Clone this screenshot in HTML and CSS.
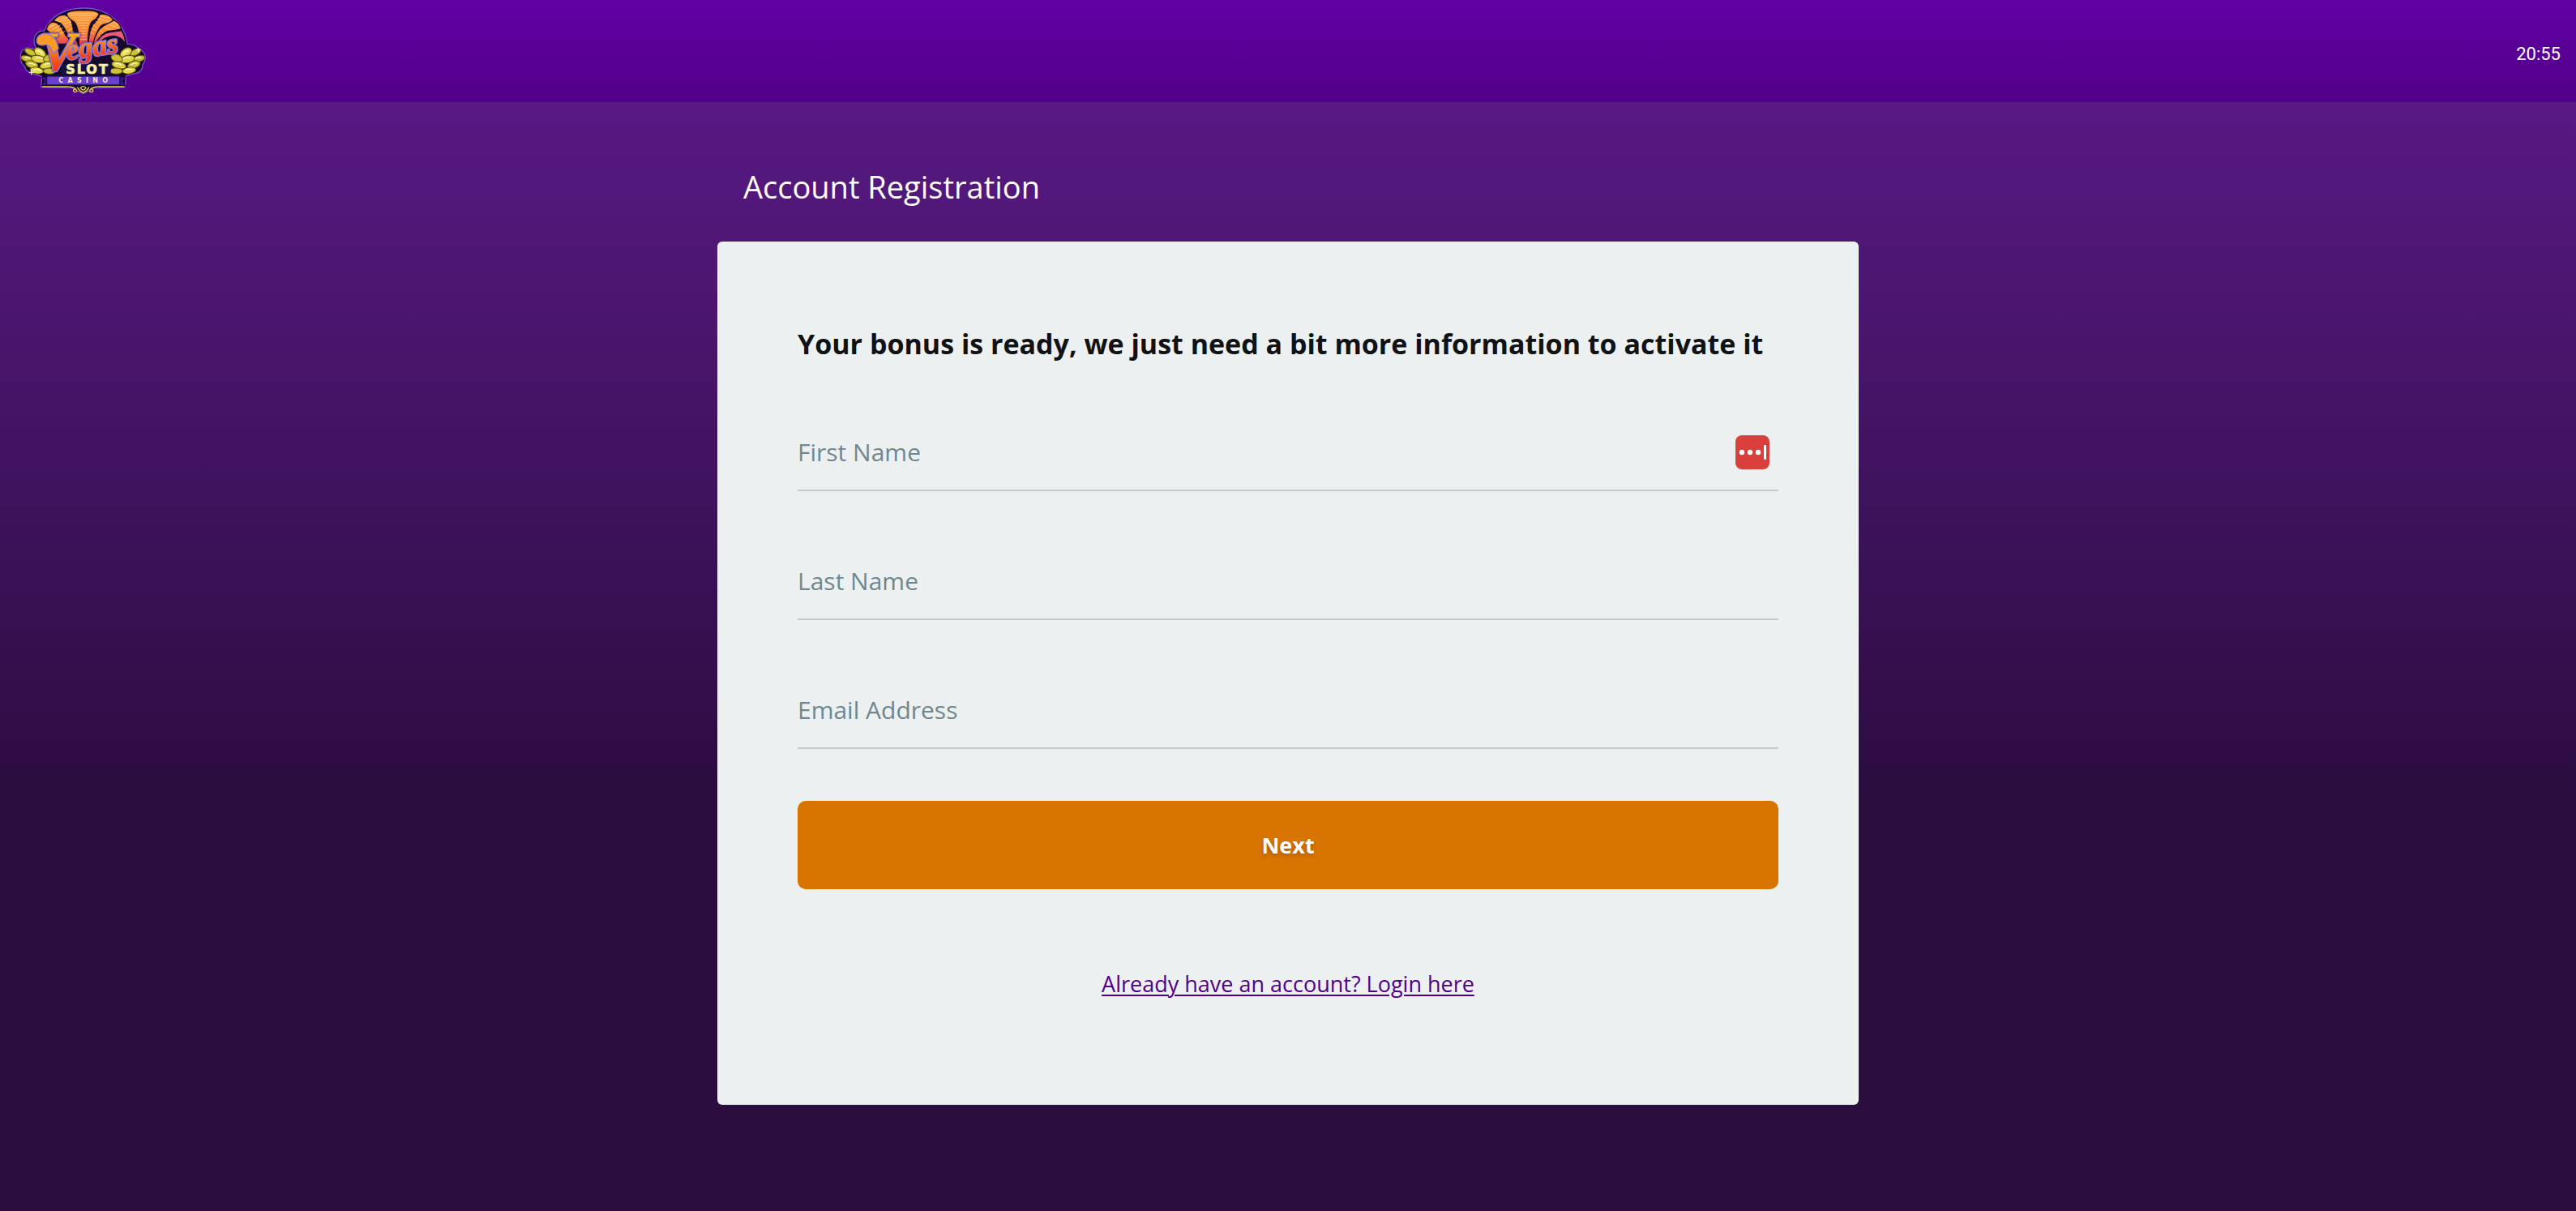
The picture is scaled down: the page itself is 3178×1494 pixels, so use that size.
FILE: index.html
```html
<!DOCTYPE html>
<html lang="en">
<head>
<meta charset="utf-8">
<meta name="viewport" content="width=device-width, initial-scale=1">
<title>Account Registration</title>
<link rel="stylesheet" href="styles.css">
</head>
<body>
<header class="topbar">
  <a class="brand" href="#" aria-label="Vegas Slot Casino">
    <svg class="logo" viewBox="39 18 480 336" aria-hidden="true">
      <defs>
        <linearGradient id="flame" x1="0" y1="0" x2="0" y2="1">
          <stop offset="0.2" stop-color="#ffb21a"/>
          <stop offset="0.8" stop-color="#f0381c"/>
        </linearGradient>
        <linearGradient id="fan" x1="0" y1="0" x2="0" y2="1">
          <stop offset="0" stop-color="#ffa040"/>
          <stop offset="0.5" stop-color="#f98a2e"/>
          <stop offset="1" stop-color="#e8405c"/>
        </linearGradient>
        <g id="coins" stroke="#5d5608" stroke-width="3" fill="#cdc236">
          <ellipse cx="82" cy="190" rx="22" ry="11" transform="rotate(28 82 190)"/>
          <ellipse cx="70" cy="214" rx="23" ry="11" transform="rotate(14 70 214)"/>
          <ellipse cx="118" cy="192" rx="24" ry="15" transform="rotate(35 118 192)" fill="#e4d94c"/>
          <ellipse cx="88" cy="236" rx="24" ry="13" transform="rotate(18 88 236)"/>
          <ellipse cx="112" cy="216" rx="27" ry="14" transform="rotate(10 112 216)" fill="#ddd144"/>
          <ellipse cx="152" cy="212" rx="22" ry="14" transform="rotate(-20 152 212)"/>
          <ellipse cx="106" cy="258" rx="25" ry="12" transform="rotate(8 106 258)" fill="#e4d94c"/>
          <ellipse cx="144" cy="238" rx="27" ry="13" transform="rotate(-14 144 238)" fill="#ddd144"/>
          <ellipse cx="154" cy="260" rx="24" ry="11"/>
          <path d="M62 212q10-7 22 2M102 213q14-8 26 2M76 234q10-7 24 4M134 238q10-9 24-4M96 257q12-8 24 1M107 186q14-4 20 12" fill="none" stroke="#fffbc0" stroke-width="4"/>
        </g>
      </defs>
      <!-- dark silhouette with the violet rim -->
      <path d="M133 112C158 52 215 26 284 27C362 28 430 75 442 160Q470 160 484 178Q510 190 508 212Q506 228 498 236Q498 262 474 268L436 278L433 320L318 322L278 344L236 322L122 320L125 280L92 270Q64 262 62 244Q44 230 46 205Q44 184 68 174L106 180Q84 140 110 118Q120 110 133 112Z" fill="#160a2c" stroke="#7651cb" stroke-width="4" stroke-linejoin="round"/>
      <use href="#coins"/>
      <use href="#coins" transform="matrix(-1 0 0 1 554 0)"/>
      <!-- feathered fan -->
      <g fill="url(#fan)" stroke="#160a2c" stroke-width="4" stroke-linejoin="round">
        <path d="M142 108Q145 82 166 78Q190 78 212 126L244 160H180Q150 110 142 108Z"/>
        <path d="M168 74Q184 50 210 52Q236 60 238 92Q242 128 262 166H230Q222 112 195 84Z"/>
        <path d="M216 48Q224 34 280 36Q328 34 337 48Q332 66 312 76Q296 88 296 166H262Q262 96 244 78Q220 66 216 48Z"/>
        <path d="M342 48Q374 48 388 68Q390 82 352 88Q330 98 318 160H296Q302 90 326 76Z"/>
        <path d="M392 72Q416 84 418 104Q400 110 370 112Q338 124 326 160H314Q326 108 354 92Z"/>
        <path d="M420 110Q434 132 434 160Q420 132 390 130Q354 132 336 160H324Q342 122 376 116Z" fill="#ec5a78"/>
      </g>
      <g fill="none" stroke="#ffd9a8" stroke-width="2">
        <path d="M226 48H326M230 55H322M240 63H314M250 72H302M256 82H298M262 92H294M264 102H292M266 112H290M266 122H290M267 132H290M268 142H290"/>
        <path d="M176 72L224 60M188 77L230 70M204 86L234 78M214 98L236 88M222 112L240 100M226 124L244 114M152 98L182 84M160 108L194 90M170 116L204 100M180 128L212 112"/>
        <path d="M338 56L376 64M330 66L374 78M324 76L346 84M314 88L330 100M308 102L324 110M304 116L318 124M386 78L408 90M372 88L410 100M356 98L380 108M342 110L352 120M332 124L342 132"/>
      </g>
      <g class="logo-script">
        <text x="118" y="256" font-size="200">V</text>
        <text x="218" y="218" font-size="106" transform="rotate(-8 218 218)">egas</text>
        <path d="M108 152Q108 122 142 124Q176 130 184 176L168 192Q154 152 130 162Q114 164 108 152Z" fill="#ff9a22"/>
      </g>
      <path d="M198 235H384L378 272H198Z" fill="#171044"/>
      <text class="logo-slot" x="294" y="270" text-anchor="middle" font-size="48">SLOT</text>
      <!-- ribbon and scrollwork -->
      <path d="M124 282H146V314H124L134 298ZM434 282H410V314H434L424 298Z" fill="#3c1797" stroke="#120a30" stroke-width="3"/>
      <path d="M142 278H414V312H142Z" fill="#6b3fd0" stroke="#171044" stroke-width="5"/>
      <text class="logo-casino" x="286" y="304" text-anchor="middle" font-size="24">CASINO</text>
      <path d="M126 318H214Q240 316 250 326Q260 338 246 338Q236 332 248 326M430 318H344Q316 316 306 326Q296 338 310 338Q320 332 308 326M256 320Q264 334 278 340Q292 334 300 320M268 322Q278 312 288 322Q278 338 268 322Z" fill="none" stroke="#e8da31" stroke-width="4"/>
      <path d="M86 256v18M77 265h18M482 174v16M474 182h16" stroke="#fff" stroke-width="3"/>
    </svg>
  </a>
  <time class="clock" datetime="20:55">20:55</time>
</header>
<main class="page">
  <h1 class="page-title">Account Registration</h1>
  <section class="card">
    <h2 class="card-title">Your bonus is ready, we just need a bit more information to activate it</h2>
    <form class="form">
      <div class="field">
        <label class="field-label" for="first-name">First Name</label>
        <input class="field-input" id="first-name" type="text">
        <button class="autofill" type="button" aria-label="Fill from password manager">
          <svg class="autofill-icon" viewBox="0 0 42 42" aria-hidden="true">
            <rect width="42" height="42" rx="8" fill="#d93f3b"/>
            <circle cx="8" cy="21" r="3.2" fill="#fff"/>
            <circle cx="18" cy="21" r="3.2" fill="#fff"/>
            <circle cx="28" cy="21" r="3.2" fill="#fff"/>
            <rect x="35" y="12" width="3" height="18" rx="1" fill="#fff"/>
          </svg>
        </button>
      </div>
      <div class="field">
        <label class="field-label" for="last-name">Last Name</label>
        <input class="field-input" id="last-name" type="text">
      </div>
      <div class="field">
        <label class="field-label" for="email">Email Address</label>
        <input class="field-input" id="email" type="email">
      </div>
      <button class="next" type="submit">Next</button>
    </form>
    <p class="login"><a class="login-link" href="#">Already have an account? Login here</a></p>
  </section>
</main>
</body>
</html>
```
FILE: styles.css
```css
* {
  box-sizing: border-box;
}

body {
  margin: 0;
  min-height: 100vh;
  background: #2b0d40 linear-gradient(#5f1b8d, #2b0d40 980px) no-repeat;
  font-family: "Segoe UI", "Open Sans", "Noto Sans", sans-serif;
}

.topbar {
  display: flex;
  align-items: center;
  justify-content: space-between;
  height: 126px;
  padding: 0 19px 0 23px;
  background: linear-gradient(#6100a4, #520089);
}

.brand,
.logo {
  display: block;
}

.logo {
  width: 160px;
  height: 112px;
}

.logo-script {
  fill: url(#flame);
  stroke: #8d77df;
  stroke-width: 9px;
  stroke-linejoin: round;
  paint-order: stroke;
  filter: drop-shadow(0 0 3px #160a2c);
  font-family: "Liberation Serif", serif;
  font-style: italic;
  font-weight: 700;
}

.logo-slot {
  fill: #f8f29a;
  stroke: #f8f29a;
  stroke-width: 2px;
  font-family: "DejaVu Sans", sans-serif;
  font-weight: 700;
  letter-spacing: 6px;
}

.logo-casino {
  fill: #f5f0b4;
  font-family: "DejaVu Sans", sans-serif;
  font-weight: 700;
  letter-spacing: 16px;
}

.clock {
  padding-top: 8px;
  color: #fff;
  font: 400 22px/28px Roboto, sans-serif;
}

.page {
  max-width: 1408px;
  margin: 0 auto;
  padding: 72px 0 132px;
}

.page-title {
  margin: 0;
  padding: 0 32px;
  color: #fff;
  font-size: 38px;
  font-weight: 400;
  line-height: 64px;
}

.card {
  margin-top: 36px;
  padding: 99px;
  border-radius: 6px;
  background: #ecf0f1;
}

.card-title {
  margin: 0;
  color: #101214;
  font-size: 34px;
  font-weight: 700;
  line-height: 54px;
}

.form {
  display: flex;
  flex-direction: column;
  gap: 64px;
  padding-top: 60px;
}

.field {
  display: grid;
  grid-template-columns: 1fr auto;
  align-items: center;
  height: 95px;
  padding-right: 11px;
  border-bottom: 2px solid #c3cbd0;
}

/* The label rests in the same cell as its input until the input has focus. */
.field-label,
.field-input {
  grid-area: 1 / 1;
}

.field-label {
  color: #6f878f;
  font-size: 30px;
  line-height: 44px;
}

.field:focus-within .field-label {
  align-self: start;
  font-size: 20px;
  line-height: 24px;
}

.field-input {
  width: 100%;
  height: 93px;
  padding: 0;
  border: 0;
  outline: 0;
  background: none;
  color: #101214;
  font: 400 30px/44px "Segoe UI", "Open Sans", "Noto Sans", sans-serif;
}

.autofill {
  padding: 0;
  border: 0;
  background: none;
  cursor: pointer;
}

.autofill-icon {
  display: block;
  width: 42px;
  height: 42px;
}

.next {
  height: 109px;
  border: 0;
  border-radius: 10px;
  background: #d87400;
  color: #fff;
  font: 700 27px/40px "Segoe UI", "Open Sans", "Noto Sans", sans-serif;
  text-shadow: 0 3px 5px rgba(0, 0, 0, 0.2);
  cursor: pointer;
}

.login {
  margin: 97px 0 30px;
  font-size: 27px;
  line-height: 40px;
  text-align: center;
}

.login-link {
  color: #520089;
  text-decoration-thickness: 2px;
  text-underline-offset: 3px;
}
```
